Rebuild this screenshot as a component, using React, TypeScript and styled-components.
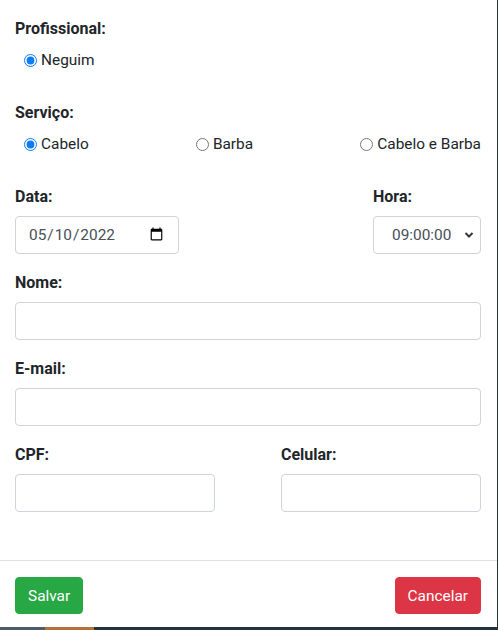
import styled, { createGlobalStyle } from 'styled-components'

const GlobalStyle = createGlobalStyle`
    html, body {
        margin: 0;
        padding: 0;
        background: #22323c;
    }
    body {
        font-family: Roboto, "Liberation Sans", sans-serif;
        color: #212529;
    }
    * {
        box-sizing: border-box;
    }
`

const Page = styled.div`
    width: 498px;
    height: 630px;
    display: flex;
    flex-direction: column;
    overflow: hidden;
`

const Modal = styled.div`
    width: 497px;
    height: 627px;
    background: #fff;
    display: flex;
    flex-direction: column;
`

const Backdrop = styled.div`
    display: flex;
    height: 3px;
`

const Stripe = styled.div<{ $color: string, $width?: number }>`
    background: ${({ $color }) => $color};
    ${({ $width }) => $width ? `width: ${$width}px;` : 'flex: 1;'}
`

const ModalBody = styled.div`
    flex: 1;
    padding: 16px 16px 0 15px;
`

const Group = styled.div<{ $gap?: number }>`
    margin-bottom: ${({ $gap }) => $gap ?? 16}px;
`

const Label = styled.div`
    font-size: 16px;
    font-weight: 700;
    line-height: 26px;
    margin-bottom: 6px;
`

const RadioRow = styled.div<{ $spread?: boolean }>`
    display: flex;
    justify-content: ${({ $spread }) => $spread ? 'space-between' : 'flex-start'};
    padding-left: 9px;
`

const RadioItem = styled.label`
    display: flex;
    align-items: center;
    font-size: 15.4px;
    line-height: 24px;
    cursor: pointer;
    input {
        margin: 0 4px 0 0;
        width: 13px;
        height: 13px;
        accent-color: #0b7cf5;
    }
`

const Row = styled.div`
    display: flex;
    justify-content: space-between;
`

const Field = styled.div<{ $width?: number }>`
    display: flex;
    flex-direction: column;
    ${({ $width }) => $width ? `width: ${$width}px;` : 'flex: 1;'}
`

const Input = styled.input`
    height: 38px;
    width: 100%;
    border: 1px solid #ced4da;
    border-radius: 4px;
    padding: 6px 12px;
    font-family: Roboto, "Liberation Sans", sans-serif;
    font-size: 15.4px;
    color: #495057;
    background: #fff;
    outline: none;
`

const SelectWrap = styled.div`
    position: relative;
    width: 100%;
    svg {
        position: absolute;
        right: 7px;
        top: 15px;
        pointer-events: none;
    }
`

const Select = styled.select`
    appearance: none;
    height: 38px;
    width: 100%;
    border: 1px solid #ced4da;
    border-radius: 4px;
    padding: 6px 0 6px 18px;
    font-family: Roboto, "Liberation Sans", sans-serif;
    font-size: 15.4px;
    color: #495057;
    background: #fff;
    outline: none;
`

const Footer = styled.div`
    border-top: 1px solid #dee2e6;
    padding: 16px 16px 13px 15px;
    display: flex;
    justify-content: space-between;
`

const Button = styled.button<{ $variant: 'success' | 'danger' }>`
    height: 37px;
    padding: 0 12px;
    border: 1px solid ${({ $variant }) => $variant === 'success' ? '#28a745' : '#dc3545'};
    background: ${({ $variant }) => $variant === 'success' ? '#28a745' : '#dc3545'};
    color: #fff;
    border-radius: 4px;
    font-family: Roboto, "Liberation Sans", sans-serif;
    font-size: 15.4px;
    cursor: pointer;
`

const App = () => {
    return (
        <Page>
            <GlobalStyle />
            <Modal>
                <ModalBody>
                    <Group $gap={28}>
                        <Label>Profissional:</Label>
                        <RadioRow>
                            <RadioItem><input type="radio" name="prof" defaultChecked />Neguim</RadioItem>
                        </RadioRow>
                    </Group>
                    <Group $gap={28}>
                        <Label>Serviço:</Label>
                        <RadioRow $spread>
                            <RadioItem><input type="radio" name="serv" defaultChecked />Cabelo</RadioItem>
                            <RadioItem><input type="radio" name="serv" />Barba</RadioItem>
                            <RadioItem><input type="radio" name="serv" />Cabelo e Barba</RadioItem>
                        </RadioRow>
                    </Group>
                    <Group>
                        <Row>
                            <Field $width={164}>
                                <Label>Data:</Label>
                                <Input type="date" defaultValue="2022-05-10" />
                            </Field>
                            <Field $width={108}>
                                <Label>Hora:</Label>
                                <SelectWrap>
                                    <Select defaultValue="09:00:00">
                                        <option>09:00:00</option>
                                        <option>10:00:00</option>
                                        <option>11:00:00</option>
                                    </Select>
                                    <svg width="10" height="8" viewBox="0 0 10 8">
                                        <path d="M1.5 2 L5 5.5 L8.5 2" stroke="#343a40" strokeWidth="2" fill="none" />
                                    </svg>
                                </SelectWrap>
                            </Field>
                        </Row>
                    </Group>
                    <Group>
                        <Label>Nome:</Label>
                        <Input type="text" />
                    </Group>
                    <Group>
                        <Label>E-mail:</Label>
                        <Input type="email" />
                    </Group>
                    <Group>
                        <Row>
                            <Field $width={200}>
                                <Label>CPF:</Label>
                                <Input type="text" />
                            </Field>
                            <Field $width={200}>
                                <Label>Celular:</Label>
                                <Input type="text" />
                            </Field>
                        </Row>
                    </Group>
                </ModalBody>
                <Footer>
                    <Button $variant="success">Salvar</Button>
                    <Button $variant="danger">Cancelar</Button>
                </Footer>
            </Modal>
            <Backdrop>
                <Stripe $color="#4d5c66" $width={45} />
                <Stripe $color="#b0713a" $width={49} />
                <Stripe $color="#24343f" />
            </Backdrop>
        </Page>
    )
}

export default App
